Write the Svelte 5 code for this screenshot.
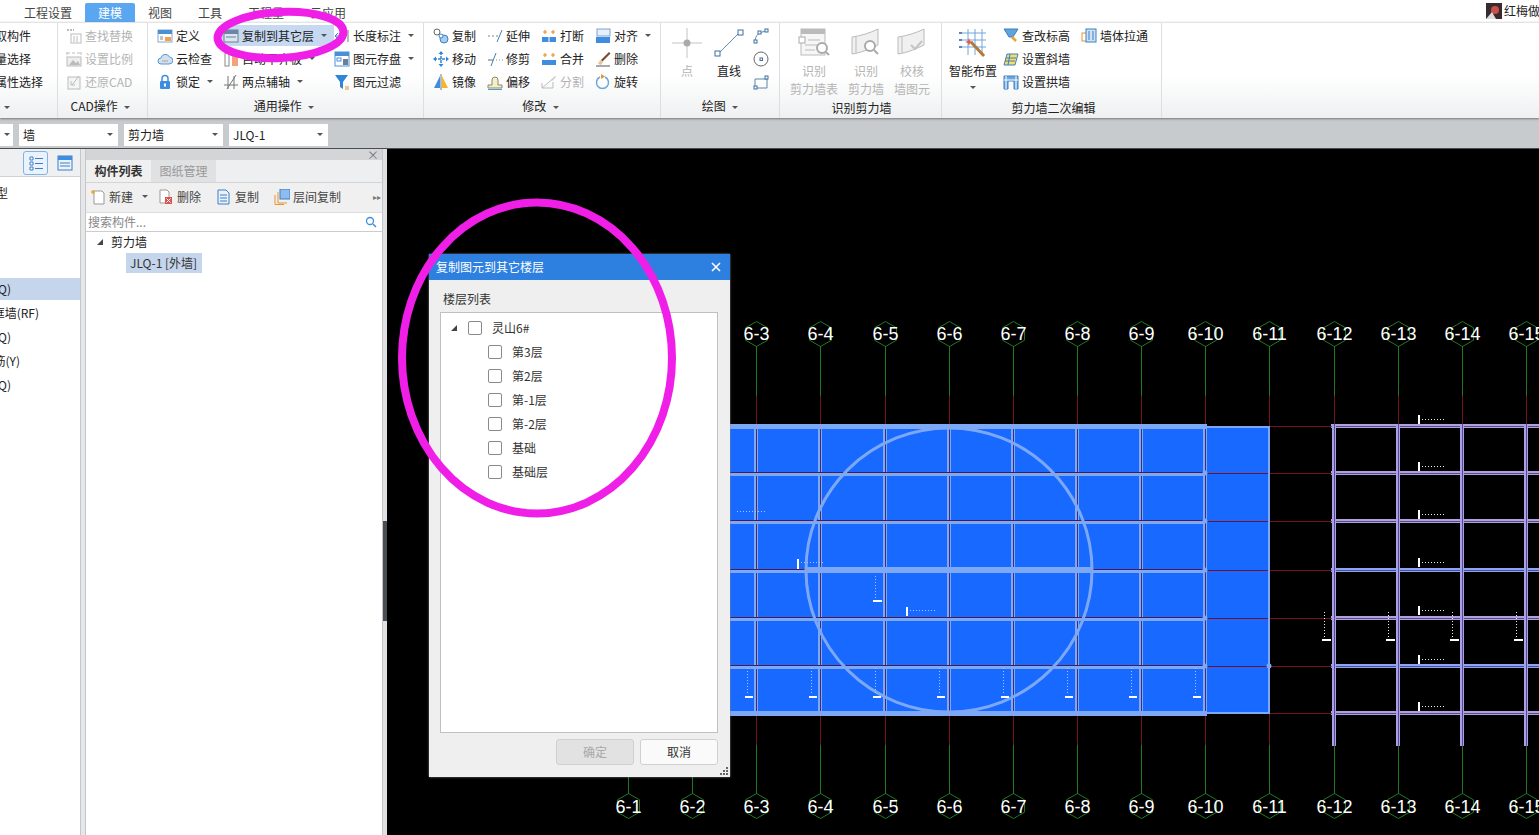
<script>
  const icons = {
    define: '<rect x="1" y="2" width="14" height="12" fill="#fff" stroke="#8aa6c4"/><rect x="1" y="2" width="14" height="4" fill="#4a90d9"/><rect x="8" y="9" width="6" height="4" fill="#f5a04a"/><path d="M3 9h3M3 11h3" stroke="#888"/>',
    floors: '<rect x="1" y="2" width="14" height="12" fill="#dde6f0" stroke="#6d7f96"/><rect x="1" y="2" width="14" height="4" fill="#6d85a6"/><path d="M3 9h10" stroke="#6d7f96"/>',
    cloud: '<path d="M4 13a3 3 0 0 1 0-6 4.5 4.5 0 0 1 8.500-1A3.500 3.500 0 0 1 12 13z" fill="#cfe2f5" stroke="#5d95cc"/><path d="M5 10h6" stroke="#c9a25a"/>',
    lock: '<rect x="3" y="7" width="10" height="8" rx="1" fill="#3e8de0"/><path d="M5 7V4.500a3 3 0 0 1 6 0V7" fill="none" stroke="#3e8de0" stroke-width="1.500"/><rect x="7" y="9.500" width="2" height="3" fill="#fff"/>',
    flush: '<rect x="2" y="2" width="4" height="13" fill="#fff" stroke="#888"/><rect x="9" y="2" width="6" height="13" fill="#f5a27a"/>',
    axis: '<path d="M1 11h14M4 15 13 1M5 2v13M11 2v13" stroke="#777" fill="none"/>',
    length: '<path d="M1 8h5M1 8l3-3M1 8l3 3" stroke="#3e7fc4" fill="none"/><path d="M14 2v12" stroke="#777"/>',
    save: '<rect x="1" y="1" width="14" height="14" fill="#fff" stroke="#4a90d9"/><rect x="1" y="1" width="14" height="4" fill="#4a90d9"/><rect x="3" y="7" width="4" height="3" fill="#fff" stroke="#4a90d9"/><rect x="9" y="8" width="5" height="6" fill="#6b7f99"/>',
    filter: '<path d="M1 1h13L9 8v7L6 13V8z" fill="#2f86d8"/><path d="M11 13h4M11 15h4" stroke="#e88b35"/>',
    find: '<path d="M1 2h7" stroke="#bbb" stroke-width="2" stroke-dasharray="2 1"/><rect x="5" y="6" width="10" height="9" fill="#fff" stroke="#bbb"/><path d="M8 8v6M11 8v6" stroke="#bbb"/>',
    scale: '<path d="M1 1v3M15 1v3M1 2h14" stroke="#bbb" fill="none" stroke-dasharray="3 2"/><rect x="1" y="6" width="14" height="9" fill="#eee" stroke="#bbb"/><path d="m3 14 4-5 3 3 2-2 2 4z" fill="#bbb"/>',
    restore: '<rect x="2" y="3" width="12" height="12" fill="#f5f5f5" stroke="#bbb"/><path d="M6 11 13 2M5 7v4h4" stroke="#bbb" fill="none"/>',
    copy: '<circle cx="4" cy="4" r="3" fill="#fff" stroke="#666"/><circle cx="11" cy="11" r="4" fill="#a9cdf0" stroke="#3e7fc4"/><circle cx="8" cy="8" r="2" fill="#fff" stroke="#3e7fc4"/>',
    move: '<path d="M8 1v14M1 8h14" stroke="#2f86d8" stroke-width="1.500" stroke-dasharray="3 1"/><path d="M8 0l2.500 3h-5zM8 16l2.500-3h-5zM0 8l3-2.500v5zM16 8l-3-2.500v5z" fill="#2f86d8"/>',
    mirror: '<path d="M7 2v12H1z" fill="#3e8de0"/><path d="M9 2v12h6z" fill="#f5b52e"/><path d="M8 0v16" stroke="#777"/>',
    extend: '<path d="M1 8h2M5 8h2M9 8h2" stroke="#888"/><path d="m10 14 5-12" stroke="#3e7fc4"/>',
    trim: '<path d="M1 9h5" stroke="#666"/><path d="M9 9h1M12 9h1M15 9h1" stroke="#888"/><path d="M4 15 9 2" stroke="#3e7fc4"/>',
    offset: '<path d="M1 14v-3h4V6a3 3 0 0 1 6 0v5h4v3z" fill="#f5eecb" stroke="#8a8a6a"/><path d="M1 15.500h14" stroke="#5d95cc"/>',
    breakk: '<rect x="1" y="9" width="6.500" height="5" fill="#3e8de0"/><rect x="8.500" y="9" width="6.500" height="5" fill="#3e8de0"/><path d="M2 4h4M4 2v4M10 4h4M12 2v4" stroke="#e8932e" stroke-width="1.200"/>',
    merge: '<rect x="1" y="9" width="14" height="5" fill="#3e8de0"/><path d="M2 4h4M4 2v4M10 4h4M12 2v4" stroke="#e8932e" stroke-width="1.200"/>',
    split: '<path d="M1 14 14 3M1 14h11V8M1 9v5" stroke="#bbb" fill="none"/><path d="m10 6 4-4 1 1-4 4z" fill="#ccc"/>',
    align: '<rect x="2" y="1" width="13" height="7" fill="#e6effa" stroke="#7fa3cc"/><rect x="1" y="9" width="14" height="6" fill="#3e8de0"/>',
    erase: '<path d="M1 15h14" stroke="#555"/><path d="m3 13 2-4 3 2-2 3z" fill="#e8c49a"/><path d="m6 9 8-8 1.500 1.500-8 8z" fill="#7a4a2a"/>',
    rotate: '<path d="M10 3a6 6 0 1 1-5 0" fill="none" stroke="#6fa6dc" stroke-width="1.500"/><path d="m6 0 4 2.500L6 5z" fill="#e8932e"/>',
    arc: '<path d="M2 14c0-7 4-10 12-11" fill="none" stroke="#5d84b0"/><rect x="1" y="12" width="3" height="3" fill="#fff" stroke="#3e6f9e"/><rect x="5" y="3" width="3" height="3" fill="#fff" stroke="#3e6f9e"/><rect x="12" y="1" width="3" height="3" fill="#fff" stroke="#3e6f9e"/>',
    circle: '<circle cx="8" cy="8" r="7" fill="none" stroke="#666"/><rect x="7" y="7" width="2.500" height="2.500" fill="#fff" stroke="#3e6f9e"/>',
    rect: '<path d="M2 5h12v9H2z" fill="none" stroke="#5d84b0"/><rect x="1" y="12" width="3" height="3" fill="#fff" stroke="#3e6f9e"/><rect x="12" y="2" width="3" height="3" fill="#fff" stroke="#3e6f9e"/>',
    height: '<path d="M1 1h14l-5 8H6z" fill="#5ea5dc" stroke="#3e7fc4"/><path d="m9 9 4 4" stroke="#e8a62e" stroke-width="2.500"/>',
    slant: '<path d="M4 3h11l-3 11H1z" fill="#f5dd6a" stroke="#3e7fc4"/><path d="M3 7h10M2 10h10M7 3 5 14" stroke="#3e7fc4" fill="none"/>',
    arch: '<path d="M1 15V2h14v13h-4V7H5v8z" fill="#6fa6dc" stroke="#3e7fc4"/><path d="M3 2v13M13 2v13M1 6h14" stroke="#fff"/>',
    pull: '<rect x="1" y="5" width="10" height="8" fill="none" stroke="#e8932e"/><rect x="5" y="1" width="10" height="13" fill="#cfe2f5" stroke="#3e7fc4"/><path d="M8 3v9M12 3v9" stroke="#3e7fc4"/>',
    point: '<path d="M16 1v30M1 16h30" stroke="#c4c4c4"/><circle cx="16" cy="16" r="3.500" fill="#aaa"/>',
    line: '<path d="M5 27 27 5" stroke="#6a8db0"/><rect x="2" y="24" width="5" height="5" fill="#fff" stroke="#3e6f9e"/><rect x="25" y="3" width="5" height="5" fill="#fff" stroke="#3e6f9e"/>',
    idTable: '<rect x="3" y="2" width="24" height="26" fill="#f6f6f6" stroke="#bbb"/><rect x="3" y="2" width="24" height="5" fill="#bbb"/><rect x="1" y="10" width="6" height="6" fill="#fff" stroke="#aaa"/><path d="M10 13h12M7 18h14M7 23h10" stroke="#bbb"/><circle cx="24" cy="21" r="5" fill="#fff" stroke="#aaa" stroke-width="2"/><path d="m28 25 3 3" stroke="#aaa" stroke-width="2"/>',
    idWall: '<path d="M2 10c8-1 18-4 26-8v16c-8 4-18 8-26 9z" fill="#f0f0f0" stroke="#bbb"/><path d="M6 10v16" stroke="#bbb"/><circle cx="20" cy="19" r="5" fill="#fff" stroke="#aaa" stroke-width="2"/><path d="m24 23 4 4" stroke="#aaa" stroke-width="2"/>',
    checkWall: '<path d="M2 10c8-1 18-4 26-8v16c-8 4-18 8-26 9z" fill="#f0f0f0" stroke="#bbb"/><path d="M6 10v16" stroke="#bbb"/><path d="m15 18 4 4 7-8" fill="none" stroke="#c4c4c4" stroke-width="2"/>',
    smart: '<path d="M3 6h26M3 13h26M3 20h26M11 2v26M18 2v26M25 2v26" stroke="#6fa6dc"/><path d="M2 5h3v2H2zM2 12h3v2H2zM2 19h3v2H2z" fill="#5d84b0"/><path d="m14 15 13 14" stroke="#b07a3e" stroke-width="3"/><path d="m12 11 1 3 3 1-3 1-1 3-1-3-3-1 3-1z" fill="#e85a3e"/>',
    newdoc: '<path d="M4 2h8l2 2v11H4z" fill="#fff" stroke="#999"/><path d="M3 1v4M1 3h4" stroke="#e8a62e" stroke-width="1.500"/>',
    del: '<path d="M2 1h7l2 2v11H2z" fill="#fff" stroke="#999"/><rect x="7" y="8" width="7" height="7" fill="#d9534f"/><path d="m8.500 9.500 4 4m0-4-4 4" stroke="#fff"/>',
    doc: '<path d="M2 1h8l3 3v11H2z" fill="#eaf2fb" stroke="#3e7fc4"/><path d="M4 6h7M4 9h7M4 12h7" stroke="#3e7fc4"/>',
    layercopy: '<rect x="6" y="0" width="10" height="10" fill="#8cbcf0" stroke="#3e7fc4"/><path d="M4 3v11h9M1 6v9.500h9" fill="none" stroke="#e8932e"/>',
    listview: '<path d="M2 2h3v3H2zM2 7h3v3H2zM2 12h3v3H2z" fill="#fff" stroke="#3e7fc4"/><path d="M7 3.500h8M7 8.500h8M7 13.500h8" stroke="#3e7fc4"/>',
    cardview: '<rect x="1" y="1" width="14" height="14" fill="#eaf2fb" stroke="#3e7fc4"/><rect x="1" y="1" width="14" height="4" fill="#3e8de0"/><path d="M3 8h10M3 11h10" stroke="#3e7fc4"/>'
  };

  const g2 = [
    { i: 'find', t: '查找替换', off: true },
    { i: 'scale', t: '设置比例', off: true },
    { i: 'restore', t: '还原CAD', off: true }
  ];
  const g3 = [
    [
      { i: 'define', t: '定义' },
      { i: 'cloud', t: '云检查' },
      { i: 'lock', t: '锁定', more: true }
    ],
    [
      { i: 'floors', t: '复制到其它层', more: true, hot: true },
      { i: 'flush', t: '自动平齐板', more: true },
      { i: 'axis', t: '两点辅轴', more: true }
    ],
    [
      { i: 'length', t: '长度标注', more: true },
      { i: 'save', t: '图元存盘', more: true },
      { i: 'filter', t: '图元过滤' }
    ]
  ];
  const g4 = [
    [{ i: 'copy', t: '复制' }, { i: 'move', t: '移动' }, { i: 'mirror', t: '镜像' }],
    [{ i: 'extend', t: '延伸' }, { i: 'trim', t: '修剪' }, { i: 'offset', t: '偏移' }],
    [{ i: 'breakk', t: '打断' }, { i: 'merge', t: '合并' }, { i: 'split', t: '分割', off: true }],
    [{ i: 'align', t: '对齐', more: true }, { i: 'erase', t: '删除' }, { i: 'rotate', t: '旋转' }]
  ];
  const g7a = [
    { i: 'height', t: '查改标高' },
    { i: 'slant', t: '设置斜墙' },
    { i: 'arch', t: '设置拱墙' }
  ];
  const leftRows = [
    { t: '剪力墙(Q)', end: 11, y: 'sel' },
    { t: '人防门框墙(RF)', end: 39 },
    { t: '砌体墙(Q)', end: 11 },
    { t: '砌体加筋(Y)', end: 20 },
    { t: '保温墙(Q)', end: 11 }
  ];
  const floors = ['第3层', '第2层', '第-1层', '第-2层', '基础', '基础层'];

  const axes = Array.from({ length: 15 }, (_, i) => ({ x: Math.round(628 + 64.14 * i), n: '6-' + (i + 1) }));
  const inner = axes.slice(2, 10);
  const right = axes.slice(11);
  const rowsY = [426, 473, 521, 570, 618, 666, 713];
  const hex = (x, y) => [[0, -12.5], [11, -6.200], [11, 6.200], [0, 12.5], [-11, 6.200], [-11, -6.200]]
    .map(([a, b]) => `${x + a},${y + b}`).join(' ');

  // dimension marks scattered on the drawing
  const hTicks = [745, 809, 873, 937, 1001, 1065, 1129, 1193].map(x => ({ x, y: 696, len: 8 }));
  const vDots = [747, 811, 875, 939, 1003, 1067, 1131, 1195].map(x => ({ x, y: 668 }));
  const rTicks = [415, 462, 510, 558, 606, 655, 702];
  const rFeet = [1322, 1386, 1450, 1514];
</script>

{#snippet icon(name, size = 16)}
  <svg class="ico" width={size} height={size} viewBox="0 0 {size} {size}">{@html icons[name]}</svg>
{/snippet}

{#snippet tool(it)}
  <div class="tool" class:off={it.off} class:hot={it.hot}>
    {@render icon(it.i)}
    <span>{it.t}</span>
    {#if it.more}<i class="caret"></i>{/if}
  </div>
{/snippet}

{#snippet big(name, lines, off)}
  <div class="big" class:off>
    <div class="big-ico">{@render icon(name, 32)}</div>
    {#each lines as l}<span>{l}</span>{/each}
  </div>
{/snippet}

<div class="app">
  <header class="tabs">
    <span class="tab">工程设置</span>
    <span class="tab active">建模</span>
    <span class="tab">视图</span>
    <span class="tab">工具</span>
    <span class="tab">工程量</span>
    <span class="tab">云应用</span>
    <div class="user">
      <svg width="16" height="16" viewBox="0 0 16 16"><rect width="16" height="16" fill="#3a2a2e"/><circle cx="9" cy="7" r="4" fill="#c9504a"/><path d="M0 16 6 9l4 7z" fill="#ddd"/></svg>
      <span>红梅做</span>
    </div>
  </header>

  <section class="ribbon">
    <div class="group g1">
      <div class="body col">
        <div class="tool plain">拾取构件</div>
        <div class="tool plain">批量选择</div>
        <div class="tool plain">按属性选择</div>
      </div>
      <div class="label left"><i class="caret"></i></div>
    </div>

    <div class="group g2">
      <div class="body col">{#each g2 as it}{@render tool(it)}{/each}</div>
      <div class="label">CAD操作 <i class="caret"></i></div>
    </div>

    <div class="group g3">
      <div class="body">
        {#each g3 as col, c}
          <div class="col c{c}">{#each col as it}{@render tool(it)}{/each}</div>
        {/each}
      </div>
      <div class="label">通用操作 <i class="caret"></i></div>
    </div>

    <div class="group g4">
      <div class="body">
        {#each g4 as col}
          <div class="col">{#each col as it}{@render tool(it)}{/each}</div>
        {/each}
      </div>
      <div class="label">修改 <i class="caret"></i></div>
    </div>

    <div class="group g5">
      <div class="body">
        {@render big('point', ['点'], true)}
        {@render big('line', ['直线'], false)}
        <div class="col small">
          <div class="tool">{@render icon('arc')}</div>
          <div class="tool">{@render icon('circle')}</div>
          <div class="tool">{@render icon('rect')}</div>
        </div>
      </div>
      <div class="label">绘图 <i class="caret"></i></div>
    </div>

    <div class="group g6">
      <div class="body">
        {@render big('idTable', ['识别', '剪力墙表'], true)}
        {@render big('idWall', ['识别', '剪力墙'], true)}
        {@render big('checkWall', ['校核', '墙图元'], true)}
      </div>
      <div class="label low">识别剪力墙</div>
    </div>

    <div class="group g7">
      <div class="body">
        <div class="big smart">
          <div class="big-ico">{@render icon('smart', 32)}</div>
          <span>智能布置</span>
          <i class="caret"></i>
        </div>
        <div class="col wide">{#each g7a as it}{@render tool(it)}{/each}</div>
        <div class="col">{@render tool({ i: 'pull', t: '墙体拉通' })}</div>
      </div>
      <div class="label low">剪力墙二次编辑</div>
    </div>
  </section>

  <nav class="filters">
    <div class="select first"><i class="caret"></i></div>
    <div class="select"><span>墙</span><i class="caret"></i></div>
    <div class="select"><span>剪力墙</span><i class="caret"></i></div>
    <div class="select"><span>JLQ-1</span><i class="caret"></i></div>
  </nav>

  <main class="work">
    <aside class="types">
      <div class="types-head">
        <button class="view on">{@render icon('listview')}</button>
        <button class="view">{@render icon('cardview')}</button>
      </div>
      <div class="type-first" style="width: 8px"><span>构件类型</span></div>
      <ul>
        {#each leftRows as r}
          <li class:sel={r.y === 'sel'}><div class="type-end" style="width: {r.end}px"><span>{r.t}</span></div></li>
        {/each}
      </ul>
    </aside>

    <aside class="parts">
      <div class="parts-close">×</div>
      <div class="parts-tabs">
        <span class="ptab on">构件列表</span>
        <span class="ptab">图纸管理</span>
      </div>
      <div class="parts-tools">
        <div class="ptool n">{@render icon('newdoc')}<span>新建</span><i class="caret"></i></div>
        <div class="ptool">{@render icon('del')}<span>删除</span></div>
        <div class="ptool">{@render icon('doc')}<span>复制</span></div>
        <div class="ptool">{@render icon('layercopy')}<span>层间复制</span></div>
        <span class="more">▸▸</span>
      </div>
      <div class="search">
        <span>搜索构件...</span>
        <svg width="12" height="12" viewBox="0 0 12 12"><circle cx="5" cy="5" r="3.500" fill="none" stroke="#3e8de0" stroke-width="1.300"/><path d="m8 8 3 3" stroke="#3e8de0" stroke-width="1.500"/></svg>
      </div>
      <div class="tree">
        <div class="tree-root"><i class="fold"></i><span>剪力墙</span></div>
        <div class="tree-leaf"><span>JLQ-1 [外墙]</span></div>
      </div>
    </aside>

    <div class="split"><i></i></div>

    <div class="canvas">
      <svg class="cad" viewBox="387 149 1152 686" width="1152" height="686">
        <rect x="730" y="426" width="539" height="288" fill="#1769ff" />

        {#each axes as a}
          <line x1={a.x + 0.5} x2={a.x + 0.5} y1="346" y2="396" stroke="#1f7a25" />
          <line x1={a.x + 0.5} x2={a.x + 0.5} y1="396" y2="745" stroke="#7a0f22" />
          <line x1={a.x + 0.5} x2={a.x + 0.5} y1="745" y2="794" stroke="#1f7a25" />
          <polygon points={hex(a.x + 0.5, 334)} fill="none" stroke="#1f7a25" />
          <polygon points={hex(a.x + 0.5, 806)} fill="none" stroke="#1f7a25" />
          <text x={a.x + 0.5} y="340" class="axis">{a.n}</text>
          <text x={a.x + 0.5} y="813" class="axis">{a.n}</text>
        {/each}

        {#each rowsY as y}
          <line x1="730" x2="1539" y1={y + 0.5} y2={y + 0.5} stroke="#7a0f22" />
        {/each}

        <!-- walls on the selected block -->
        {#each inner as a}
          <rect x={a.x - 2} y="426" width="4" height="288" fill="#7da8f5" />
          <line x1={a.x + 0.5} x2={a.x + 0.5} y1="426" y2="714" stroke="#4a2a6e" />
        {/each}
        {#each rowsY.slice(1, 6) as y}
          <rect x="730" y={y - 1} width="475" height="4" fill="#7da8f5" />
          <line x1="730" x2="1205" y1={y - 0.5} y2={y - 0.5} stroke="#4a1a50" />
        {/each}
        <rect x="730" y="424" width="477" height="5" fill="#7da8f5" />
        <rect x="730" y="711" width="477" height="5" fill="#7da8f5" />
        <rect x="806" y="567" width="286" height="6" fill="#7da8f5" />
        <path d="M1207 427h62v286h-62" fill="none" stroke="#7da8f5" stroke-width="2" />
        <circle cx="1269" cy="666" r="2.500" fill="#7da8f5" />
        {#each rowsY.slice(1, 6) as y}
          <circle cx="1205" cy={y} r="2.500" fill="#7da8f5" />
        {/each}
        <ellipse cx="949" cy="570" rx="143" ry="142" fill="none" stroke="#7da8f5" stroke-width="3" />

        <!-- walls of the next block -->
        {#each rowsY as y, i}
          <rect x="1331" y={y - 2} width="208" height="4" fill={i === 3 || i === 5 ? '#8aa5f5' : '#b0a0dc'} />
          <line x1="1331" x2="1539" y1={y + 0.5} y2={y + 0.5} stroke="#5a4a8a" />
        {/each}
        {#each right as a}
          <rect x={a.x - 2} y="424" width="4" height="322" fill="#a8a0e8" />
          <line x1={a.x + 0.5} x2={a.x + 0.5} y1="424" y2="746" stroke="#5a4a8a" />
        {/each}

        <!-- dimension marks -->
        {#each hTicks as t}
          <rect x={t.x} y={t.y} width={t.len} height="2" fill="#fff" />
        {/each}
        {#each vDots as d}
          <line x1={d.x + 0.5} x2={d.x + 0.5} y1={d.y} y2={d.y + 27} class="dots" />
        {/each}
        <rect x="873" y="600" width="9" height="2" fill="#fff" />
        <line x1="875.5" x2="875.5" y1="576" y2="599" class="dots" />
        <rect x="797" y="559" width="2" height="10" fill="#fff" />
        <line x1="801" x2="824" y1="562.5" y2="562.5" class="dots" />
        <rect x="906" y="607" width="2" height="9" fill="#fff" />
        <line x1="910" x2="936" y1="610.5" y2="610.5" class="dots" />
        <line x1="737" x2="765" y1="511.5" y2="511.5" class="dots" />
        {#each rTicks as y}
          <rect x="1418" {y} width="2" height="9" fill="#fff" />
          <line x1="1422" x2="1446" y1={y + 4.5} y2={y + 4.5} class="dots white" />
        {/each}
        {#each rFeet as x}
          <rect {x} y="639" width="9" height="2" fill="#fff" />
          <line x1={x + 2.5} x2={x + 2.5} y1="612" y2="638" class="dots white" />
        {/each}
      </svg>

      <div class="dialog">
        <div class="dialog-title">
          <span>复制图元到其它楼层</span>
          <svg width="10" height="10" viewBox="0 0 10 10"><path d="m1 1 8 8m0-8-8 8" stroke="#fff" stroke-width="1.600"/></svg>
        </div>
        <div class="dialog-body">
          <div class="dialog-cap">楼层列表</div>
          <div class="floor-list">
            <div class="floor root"><i class="fold"></i><i class="check"></i><span>灵山6#</span></div>
            {#each floors as f}
              <div class="floor"><i class="check"></i><span>{f}</span></div>
            {/each}
          </div>
          <div class="dialog-btns">
            <button class="btn" disabled>确定</button>
            <button class="btn">取消</button>
          </div>
          <svg class="grip" width="8" height="8" viewBox="0 0 8 8"><path d="M6 0h2v2H6zM3 3h2v2H3zM6 3h2v2H6zM0 6h2v2H0zM3 6h2v2H3zM6 6h2v2H6z" fill="#666"/></svg>
        </div>
      </div>
    </div>
  </main>

  <svg class="marks" width="1539" height="835">
    <ellipse cx="280.500" cy="35" rx="63" ry="23" transform="rotate(-3 280 35)" />
    <ellipse cx="537" cy="358" rx="135" ry="155.500" />
  </svg>
</div>

<style>
  :global(body) {
    background: #000;
    overflow: hidden;
  }

  .app {
    position: relative;
    display: flex;
    flex-direction: column;
    width: 1539px;
    height: 835px;
    overflow: hidden;
    font: 12px/18px "Noto Sans CJK SC", "Liberation Sans", sans-serif;
    color: #222;
  }

  .tabs {
    display: flex;
    flex: none;
    align-items: flex-end;
    height: 22px;
    padding-left: 11px;
    background: #fff;
    box-sizing: border-box;
  }

  .tab {
    height: 19px;
    padding: 0 13px;
    color: #444;
    line-height: 20px;
  }

  .active {
    background: #5aa6f0;
    color: #fff;
    border-radius: 2px 2px 0 0;
  }

  .user {
    display: flex;
    align-items: center;
    gap: 2px;
    align-self: center;
    margin-left: auto;
    margin-right: -1px;
  }

  .ribbon {
    display: flex;
    flex: none;
    height: 96px;
    background: linear-gradient(#fff 55%, #eef0f1);
    border-top: 1px solid #e4e4e4;
    box-sizing: border-box;
    box-shadow: 0 1px 2px #777;
    z-index: 1;
  }

  .group {
    display: flex;
    flex: none;
    flex-direction: column;
    box-sizing: border-box;
    padding-top: 1px;
    border-right: 1px solid #dcdfe1;
  }

  .body {
    display: flex;
    height: 69px;
  }

  .col {
    display: flex;
    flex-direction: column;
  }

  .label {
    height: 20px;
    margin-top: 3px;
    padding-right: 12px;
    line-height: 20px;
    text-align: center;
  }

  .label.left {
    text-align: left;
  }

  .label.low {
    margin-top: 5px;
    padding-right: 6px;
  }

  .g5 .label {
    padding-right: 8px;
  }

  .g7 .label.low {
    padding-right: 2px;
  }

  .tool {
    display: flex;
    flex: none;
    align-items: center;
    gap: 3px;
    height: 23px;
    white-space: nowrap;
  }

  .off {
    color: #b4b4b4;
  }

  .hot {
    padding: 0 6px 0 1px;
    margin: 1px 0 1px -1px;
    height: 21px;
    background: #c6d9f1;
  }

  .ico {
    display: block;
    flex: none;
  }

  .caret {
    display: inline-block;
    width: 0;
    height: 0;
    margin: 0 0 1px 4px;
    vertical-align: middle;
    border: 3px solid transparent;
    border-top: 3px solid #555;
    border-bottom: 0;
  }

  .g1 {
    width: 75px;
    margin-left: -17px;
  }

  .g1 .label {
    padding-left: 17px;
  }

  .g2 {
    width: 90px;
    padding-left: 8px;
  }

  .g3 {
    width: 276px;
    padding-left: 9px;
  }

  .g3 .c0 {
    width: 66px;
  }

  .g3 .c1 {
    width: 111px;
  }

  .g4 {
    width: 237px;
    padding-left: 9px;
  }

  .g4 .col {
    width: 54px;
  }

  .g5 {
    width: 119px;
    padding-left: 8px;
  }

  .g5 .big {
    width: 36px;
  }

  .g5 .big + .big {
    width: 42px;
    margin-left: 3px;
  }

  .small {
    margin-left: 3px;
  }

  .g6 {
    width: 162px;
    padding-left: 8px;
  }

  .g6 .big {
    width: 52px;
  }

  .g6 .big:last-child {
    width: 40px;
  }

  .g7 {
    width: 220px;
    padding-left: 6px;
  }

  .wide {
    width: 78px;
    margin-left: 5px;
  }

  .big {
    display: flex;
    flex: none;
    flex-direction: column;
    align-items: center;
    line-height: 18px;
    white-space: nowrap;
  }

  .big-ico {
    flex: none;
    height: 38px;
    padding-top: 3px;
    box-sizing: border-box;
  }

  .smart {
    width: 50px;
  }

  .smart .caret {
    flex: none;
    margin: 6px 0 0;
  }

  .filters {
    display: flex;
    flex: none;
    gap: 6px;
    height: 31px;
    padding-top: 6px;
    box-sizing: border-box;
    background: #c8cbce;
    border-bottom: 1px solid #4a4d50;
  }

  .select {
    display: flex;
    align-items: center;
    justify-content: space-between;
    width: 99px;
    height: 22px;
    padding: 0 5px 0 4px;
    box-sizing: border-box;
    background: #fff;
  }

  .select.first {
    width: 13px;
    padding: 0;
  }

  .work {
    position: relative;
    display: flex;
    flex: 1;
    min-height: 0;
    background: #e6e7e8;
  }

  .types {
    flex: none;
    width: 81px;
    background: #fff;
    border-right: 1px solid #c4c6c8;
    box-sizing: border-box;
  }

  .types-head {
    display: flex;
    align-items: center;
    gap: 4px;
    height: 28px;
    padding-left: 23px;
    background: #eef0f1;
    border-bottom: 1px solid #d0d2d4;
    box-sizing: border-box;
  }

  .view {
    display: grid;
    place-items: center;
    width: 25px;
    height: 24px;
    padding: 0;
    background: none;
    border: 1px solid transparent;
    border-radius: 3px;
  }

  .view.on {
    background: #eaf3fc;
    border-color: #7fb2e5;
  }

  .type-first,
  .type-end {
    display: flex;
    justify-content: flex-end;
    white-space: nowrap;
  }

  .type-first {
    height: 24px;
    margin: 4px 0 73px;
    line-height: 24px;
  }

  ul {
    margin: 0;
    padding: 0;
    list-style: none;
  }

  li {
    height: 24px;
    line-height: 22px;
  }

  li.sel {
    height: 22px;
    margin-bottom: 2px;
    background: #c5d5ec;
  }

  .parts {
    display: flex;
    flex: none;
    flex-direction: column;
    width: 298px;
    margin-left: 4px;
    background: #fff;
    border-left: 1px solid #c4c6c8;
    border-right: 1px solid #c4c6c8;
    box-sizing: border-box;
  }

  .parts-close {
    flex: none;
    height: 11px;
    padding-right: 3px;
    background: #d3d5d7;
    color: #777;
    font-size: 12px;
    line-height: 11px;
    text-align: right;
  }

  .parts-tabs {
    display: flex;
    flex: none;
    height: 22px;
    background: #eeeff0;
    border-bottom: 1px solid #d4d4d4;
  }

  .ptab {
    width: 65px;
    line-height: 22px;
    text-align: center;
    color: #999;
    background: #e0e1e2;
  }

  .ptab.on {
    background: #f0f0f0;
    color: #333;
    font-weight: 700;
  }

  .parts-tools {
    display: flex;
    flex: none;
    align-items: center;
    gap: 15px;
    height: 29px;
    padding: 0 0 2px 4px;
    box-sizing: border-box;
    background: #f0f0f0;
    color: #444;
  }

  .ptool {
    display: flex;
    align-items: center;
    gap: 3px;
  }

  .ptool.n {
    margin-right: -5px;
  }

  .ptool.n .caret {
    margin-left: 6px;
  }

  .more {
    margin-left: auto;
    padding-right: 1px;
    color: #777;
    font-size: 8px;
  }

  .search {
    display: flex;
    flex: none;
    align-items: center;
    justify-content: space-between;
    height: 20px;
    padding: 0 5px 0 2px;
    border-top: 1px solid #ddd;
    border-bottom: 1px solid #ccc;
    box-sizing: border-box;
    color: #888;
  }

  .tree-root {
    display: flex;
    align-items: center;
    height: 19px;
    padding-left: 11px;
  }

  .tree-root span {
    margin-left: 8px;
  }

  .tree-leaf {
    display: inline-block;
    height: 20px;
    margin: 2px 0 0 40px;
    padding: 0 5px 0 4px;
    background: #c5d5ec;
    line-height: 20px;
    color: #333;
  }

  .fold {
    display: block;
    flex: none;
    width: 0;
    height: 0;
    border-left: 6px solid transparent;
    border-bottom: 6px solid #444;
  }

  .split {
    flex: none;
    width: 4px;
    background: #dfe0e1;
  }

  .split i {
    display: block;
    height: 100px;
    margin-top: 372px;
    background: #4a4f55;
  }

  .canvas {
    position: relative;
    flex: 1;
    background: #000;
  }

  .cad {
    display: block;
  }

  .axis {
    fill: #fff;
    font: 18px "Liberation Sans", sans-serif;
    text-anchor: middle;
  }

  .dots {
    stroke: #a9c4ef;
    stroke-dasharray: 1 2;
  }

  .dots.white {
    stroke: #eee;
  }

  /* floating window, sits on the drawing */
  .dialog {
    position: absolute;
    left: 42px;
    top: 105px;
    display: flex;
    flex-direction: column;
    width: 301px;
    height: 523px;
    background: #efefef;
    box-shadow: 0 0 2px #888;
  }

  .dialog-title {
    display: flex;
    align-items: center;
    justify-content: space-between;
    flex: none;
    height: 26px;
    padding: 0 9px 0 7px;
    background: #2d7fe0;
    color: #fff;
  }

  .dialog-body {
    position: relative;
    display: flex;
    flex: 1;
    flex-direction: column;
    padding: 10px 12px 12px 11px;
    min-height: 0;
  }

  .dialog-cap {
    height: 22px;
    margin-left: 3px;
    line-height: 18px;
    color: #333;
  }

  .floor-list {
    flex: 1;
    padding-top: 3px;
    background: #fff;
    border: 1px solid #c0c0c0;
  }

  .floor {
    display: flex;
    align-items: center;
    height: 24px;
    padding-left: 47px;
    color: #333;
  }

  .floor.root {
    padding-left: 10px;
  }

  .floor.root .check {
    margin-left: 11px;
  }

  .floor span {
    margin-left: 10px;
  }

  .check {
    display: block;
    flex: none;
    width: 12px;
    height: 12px;
    border: 1px solid #8a8a8a;
    border-radius: 2px;
    background: #fff;
  }

  .dialog-btns {
    display: flex;
    justify-content: flex-end;
    gap: 6px;
    margin-top: 6px;
  }

  .btn {
    width: 78px;
    height: 26px;
    padding: 0;
    border: 1px solid #d0d0d0;
    border-radius: 3px;
    background: #fafafa;
    color: #333;
    font: inherit;
  }

  .btn:disabled {
    background: #e2e2e2;
    color: #a8a8a8;
  }

  .grip {
    position: absolute;
    right: 2px;
    bottom: 2px;
  }

  /* hand drawn annotation over the whole window */
  .marks {
    position: absolute;
    left: 0;
    top: 0;
    z-index: 2;
    pointer-events: none;
  }

  .marks ellipse {
    fill: none;
    stroke: #f01fe8;
    stroke-width: 8;
  }
</style>
